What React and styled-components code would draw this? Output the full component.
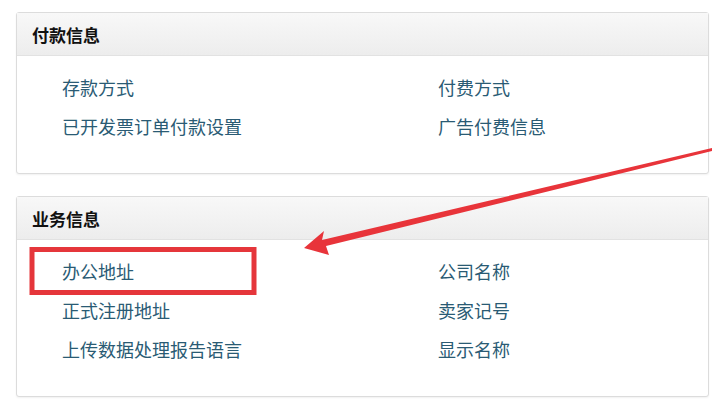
import React from "react";
import styled, { createGlobalStyle } from "styled-components";

const Global = createGlobalStyle`
  html, body { margin: 0; padding: 0; background: #ffffff; }
  body { font-family: "Noto Sans CJK SC", "Noto Sans", sans-serif; }
`;

const Page = styled.div`
  position: relative;
  width: 712px;
  height: 408px;
  overflow: hidden;
  padding: 12px 0 0 16px;
  box-sizing: border-box;
  display: flex;
  flex-direction: column;
  gap: 22px;
`;

const Panel = styled.section`
  width: 693px;
  border: 1px solid #dcdcdc;
  border-radius: 3px;
  box-shadow: 0 1px 2px rgba(0, 0, 0, 0.06);
  background: #fff;
  box-sizing: border-box;
`;

const Header = styled.div`
  height: 42px;
  display: flex;
  align-items: center;
  padding-left: 15px;
  background: linear-gradient(#f8f8f8, #ededed);
  border-bottom: 1px solid #e2e2e2;
  font-size: 17px;
  font-weight: 700;
  color: #111;
`;

const Body = styled.div`
  display: grid;
  grid-template-columns: 376px 1fr;
  grid-auto-rows: 39px;
  align-items: center;
  padding: 12px 0 27px 45px;
`;

const Link = styled.a`
  font-size: 18px;
  color: #2a5b74;
  text-decoration: none;
  line-height: 1;
  cursor: pointer;
`;

const Overlay = styled.svg`
  position: absolute;
  left: 0;
  top: 0;
  pointer-events: none;
`;

const sections = [
  {
    title: "付款信息",
    rows: [
      ["存款方式", "付费方式"],
      ["已开发票订单付款设置", "广告付费信息"],
    ],
  },
  {
    title: "业务信息",
    rows: [
      ["办公地址", "公司名称"],
      ["正式注册地址", "卖家记号"],
      ["上传数据处理报告语言", "显示名称"],
    ],
  },
];

export default function App() {
  return (
    <>
      <Global />
      <Page>
        {sections.map((s) => (
          <Panel key={s.title}>
            <Header>{s.title}</Header>
            <Body>
              {s.rows.flat().map((t) => (
                <div key={t}>
                  <Link>{t}</Link>
                </div>
              ))}
            </Body>
          </Panel>
        ))}
        <Overlay width="712" height="408" viewBox="0 0 712 408">
          <rect x="32" y="249.5" width="222" height="43" fill="none" stroke="#e5363b" strokeWidth="5" />
          <polygon
            points="304,248 324,231 322,240 712,148 712,151 326,246 329,255"
            fill="#e8343a"
          />
        </Overlay>
      </Page>
    </>
  );
}
